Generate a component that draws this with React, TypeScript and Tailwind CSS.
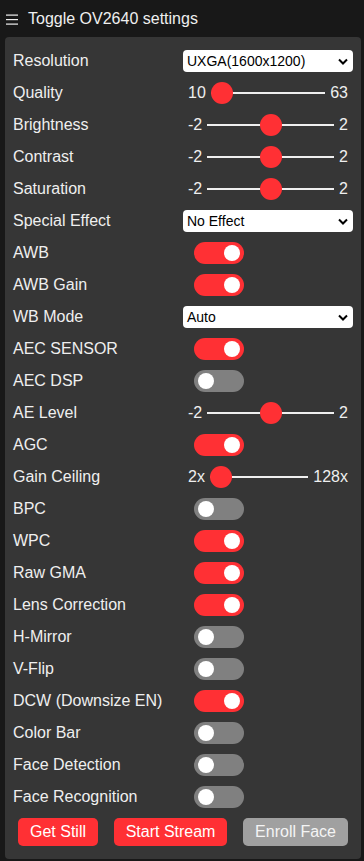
import React from 'react';

type Row =
    | { kind: 'select'; label: string; value: string }
    | { kind: 'range'; label: string; min: string; max: string; pos: number }
    | { kind: 'switch'; label: string; on: boolean };

const rows: Row[] = [
    { kind: 'select', label: 'Resolution', value: 'UXGA(1600x1200)' },
    { kind: 'range', label: 'Quality', min: '10', max: '63', pos: 0 },
    { kind: 'range', label: 'Brightness', min: '-2', max: '2', pos: 0.5 },
    { kind: 'range', label: 'Contrast', min: '-2', max: '2', pos: 0.5 },
    { kind: 'range', label: 'Saturation', min: '-2', max: '2', pos: 0.5 },
    { kind: 'select', label: 'Special Effect', value: 'No Effect' },
    { kind: 'switch', label: 'AWB', on: true },
    { kind: 'switch', label: 'AWB Gain', on: true },
    { kind: 'select', label: 'WB Mode', value: 'Auto' },
    { kind: 'switch', label: 'AEC SENSOR', on: true },
    { kind: 'switch', label: 'AEC DSP', on: false },
    { kind: 'range', label: 'AE Level', min: '-2', max: '2', pos: 0.5 },
    { kind: 'switch', label: 'AGC', on: true },
    { kind: 'range', label: 'Gain Ceiling', min: '2x', max: '128x', pos: 0 },
    { kind: 'switch', label: 'BPC', on: false },
    { kind: 'switch', label: 'WPC', on: true },
    { kind: 'switch', label: 'Raw GMA', on: true },
    { kind: 'switch', label: 'Lens Correction', on: true },
    { kind: 'switch', label: 'H-Mirror', on: false },
    { kind: 'switch', label: 'V-Flip', on: false },
    { kind: 'switch', label: 'DCW (Downsize EN)', on: true },
    { kind: 'switch', label: 'Color Bar', on: false },
    { kind: 'switch', label: 'Face Detection', on: false },
    { kind: 'switch', label: 'Face Recognition', on: false },
];

const Select = ({ value }: { value: string }) => (
    <div className="flex-1 h-[22px] bg-white rounded-[4px] flex items-center justify-between pl-[4px] pr-[5px] text-[14px] text-black">
        <span>{value}</span>
        <svg width="10" height="7" viewBox="0 0 10 7">
            <path d="M1 1.5 L5 5.5 L9 1.5" fill="none" stroke="#000" strokeWidth="2" />
        </svg>
    </div>
);

const Range = ({ min, max, pos }: { min: string; max: string; pos: number }) => (
    <div className="flex-1 flex items-center">
        <span className="px-[5px]">{min}</span>
        <div className="relative flex-1 h-[22px]">
            <div className="absolute left-0 right-0 top-[10px] h-[2px] bg-[#efefef]"></div>
            {/* thumb position taken from value */}
            <div
                className="absolute top-0 w-[22px] h-[22px] rounded-full bg-[#ff3034]"
                style={{ left: `calc((100% - 22px) * ${pos})` }}
            ></div>
        </div>
        <span className="px-[5px]">{max}</span>
    </div>
);

const Switch = ({ on }: { on: boolean }) => (
    <div className="pl-[11px] h-[22px]">
        <div className={on ? 'relative w-[50px] h-[22px] rounded-full bg-[#ff3034]' : 'relative w-[50px] h-[22px] rounded-full bg-[#808080]'}>
            <div className={on ? 'absolute top-[3px] left-[30px] w-4 h-4 rounded-full bg-white' : 'absolute top-[3px] left-[4px] w-4 h-4 rounded-full bg-white'}></div>
        </div>
    </div>
);

export default function App() {
    return (
        <div className="min-h-[861px] bg-[#181818] text-[#efefef] text-[16px] font-['Liberation_Sans',Arial,sans-serif] pl-[5px] pr-[3px] pt-[10px] pb-[4px]">
            {/* nav toggle */}
            <div className="flex items-center h-[18px] leading-[18px]">
                <svg width="12" height="11" viewBox="0 0 12 11" className="ml-[1px]">
                    <rect x="0" y="0.5" width="12" height="1.2" fill="#efefef" />
                    <rect x="0" y="5" width="12" height="1.2" fill="#efefef" />
                    <rect x="0" y="9.5" width="12" height="1.2" fill="#efefef" />
                </svg>
                <span className="ml-[10px]">Toggle OV2640 settings</span>
            </div>

            {/* settings menu */}
            <div className="mt-[9px] bg-[#363636] rounded-[4px] p-2 flex flex-col">
                {rows.map((r) => (
                    <div key={r.label} className="flex flex-nowrap items-center leading-[22px] h-[22px] my-[5px]">
                        <label className="w-[170px] shrink-0 pr-[10px] whitespace-nowrap">{r.label}</label>
                        {r.kind === 'select' && <Select value={r.value} />}
                        {r.kind === 'range' && <Range min={r.min} max={r.max} pos={r.pos} />}
                        {r.kind === 'switch' && <Switch on={r.on} />}
                    </div>
                ))}
                <div className="flex justify-between">
                    <button className="m-[5px] px-3 leading-[28px] rounded-[5px] bg-[#ff3034] text-white text-[16px]">Get Still</button>
                    <button className="m-[5px] px-3 leading-[28px] rounded-[5px] bg-[#ff3034] text-white text-[16px]">Start Stream</button>
                    <button className="m-[5px] px-3 leading-[28px] rounded-[5px] bg-[#a0a0a0] text-[#f4f4f4] text-[16px]">Enroll Face</button>
                </div>
            </div>
        </div>
    );
}
